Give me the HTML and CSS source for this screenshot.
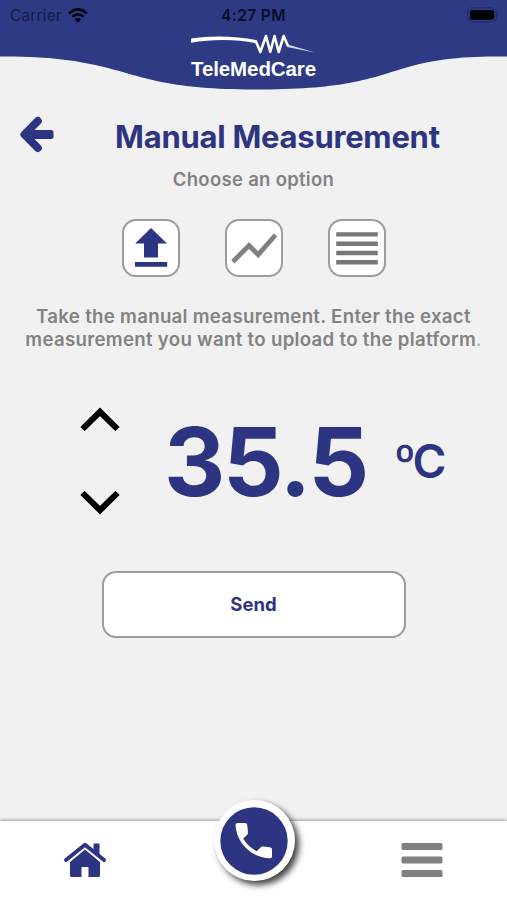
FILE: index.html
```html
<!DOCTYPE html>
<html lang="en">

<head>
    <meta charset="UTF-8">
    <meta name="viewport" content="width=device-width, initial-scale=1.0">
    <title>TeleMedCare</title>
    <link rel="stylesheet" href="styles.css">
</head>

<body>
    <div class="app">
        <!-- header -->
        <header class="header">
            <svg class="wave" width="507" height="90" viewBox="0 0 507 90">
                <path fill="#2e3a84" d="M0 0H507V56.5C472 56.5 442 57 405 68C365 80 342 89.500 254 89.500C172 89.500 146 78 108 68C70 58.500 42 56.500 0 56.500Z" />
            </svg>
            <div class="status">
                <span class="carrier">Carrier
                    <svg width="20" height="15" viewBox="0 0 20 15" fill="none" stroke="#050813" stroke-width="2.700">
                        <path d="M1 5.400Q10 -2.700 19 5.400" />
                        <path d="M4.200 8.800Q10 3.800 15.800 8.800" />
                        <path fill="#050813" stroke="none" d="M10 14.800L6.600 11.300Q10 8.600 13.400 11.300Z" />
                    </svg>
                </span>
                <span class="time">4:27 PM</span>
                <span class="battery">
                    <svg width="32" height="16" viewBox="0 0 32 16">
                        <rect x=".7" y=".8" width="28.600" height="14" rx="4.500" fill="none" stroke="#202962" />
                        <rect x="2.800" y="2.900" width="24.400" height="9.800" rx="2.500" />
                        <path fill="#202962" d="M30.500 5.500Q32.300 7.800 30.500 10Z" />
                    </svg>
                </span>
            </div>
            <div class="logo">
                <svg width="128" height="24" viewBox="0 0 128 24" fill="#fff">
                    <path d="M1 5.500C22 2 48 3 67 7.300L66 10.300C46 6 22 6 1 9.800Z" />
                    <path d="M66 8.500L70.300 19L76 3L80.300 19L84.500 3L88.700 19L93.700 3L98 13" fill="none" stroke="#fff" stroke-width="2.600" stroke-linejoin="round" />
                    <path d="M97.500 11.500L126 19.800L97 14Z" opacity=".8" />
                </svg>
                <span>TeleMedCare</span>
            </div>
        </header>

        <!-- measurement -->
        <main class="content">
            <div class="title_row">
                <svg class="back" width="36" height="37" viewBox="0 0 36 37" fill="none" stroke="#2d3583" stroke-width="8" stroke-linecap="round" stroke-linejoin="round">
                    <path d="M18.800 5L5.500 18.500L18.800 32" />
                    <path stroke-width="9" stroke-linecap="butt" d="M7 18.500H26" />
                    <rect x="20" y="14" width="14.500" height="9" rx="2.500" fill="#2d3583" stroke="none" />
                </svg>
                <h1>Manual Measurement</h1>
            </div>
            <p class="subtitle">Choose an option</p>

            <div class="options">
                <button class="option">
                    <svg width="56" height="56" viewBox="0 0 56 56" fill="#2d3583">
                        <path d="M28 8L44 23.500H35V37.500H21V23.500H12.200ZM12 42H44.200V46.800H12Z" />
                    </svg>
                </button>
                <button class="option">
                    <svg width="56" height="56" viewBox="0 0 56 56" fill="none" stroke="#808080" stroke-width="4.800">
                        <path d="M6.800 41.800L23 25.500L32.200 34.700L49.500 15" />
                    </svg>
                </button>
                <button class="option">
                    <svg width="56" height="56" viewBox="0 0 56 56" fill="#777">
                        <path d="M7.200 12.200H48.800V16.600H7.200ZM7.200 21.500H48.800V25.900H7.200ZM7.200 30.800H48.800V35.200H7.200ZM7.200 40H48.800V44.400H7.200Z" />
                    </svg>
                </button>
            </div>

            <p class="info">
                Take the manual measurement. Enter the exact<br>
                measurement you want to upload to the platform<span class="dot">.</span>
            </p>

            <div class="measure">
                <div class="arrows">
                    <svg width="40" height="26" viewBox="0 0 40 26" fill="none" stroke="#000" stroke-width="6">
                        <path d="M2.500 22.200L20 4.800L37.500 22.200" />
                    </svg>
                    <svg width="40" height="26" viewBox="0 0 40 26" fill="none" stroke="#000" stroke-width="6">
                        <path d="M2.500 3.800L20 21.200L37.500 3.800" />
                    </svg>
                </div>
                <span class="value">35.5</span>
                <span class="unit">ºC</span>
            </div>

            <button class="send">Send</button>
        </main>

        <!-- footer -->
        <footer class="footer">
            <svg class="home" width="44" height="36" viewBox="0 0 44 36" fill="#2d3583">
                <path d="M30.500 1.500H36.500V15L30.500 9.500Z" />
                <path d="M3 18L22 2.800L41 18" fill="none" stroke="#2d3583" stroke-width="4" stroke-linecap="round" stroke-linejoin="round" />
                <path d="M22 7.500L37 20V33.500Q37 35 35.500 35H25.500V25H18.500V35H8.500Q7 35 7 33.500V20Z" />
            </svg>
            <svg class="menu" width="42" height="36" viewBox="0 0 42 36" fill="#808080">
                <rect x=".5" y="1" width="41" height="7" rx="1.500" />
                <rect x=".5" y="14.500" width="41" height="7" rx="1.500" />
                <rect x=".5" y="28" width="41" height="7" rx="1.500" />
            </svg>
            <div class="call">
                <svg width="68" height="68" viewBox="0 0 68 68">
                    <circle cx="34" cy="34" r="33.700" fill="#2d3583" />
                    <path fill="#fff" d="M17.500 16H25Q27 16 27.200 18L28 25.500Q28 27 27 28L23.200 31.500Q27.500 39.500 36.800 44.200L40.500 40.500Q41.500 39.300 43 39.500L50 40.200Q52 40.500 52 42.500V49.500Q52 51.500 50 51.300C31 50.500 16.500 36 15.500 18Q15.500 16 17.500 16Z" />
                </svg>
            </div>
        </footer>
    </div>
</body>

</html>
```
FILE: styles.css
```css
* {
    box-sizing: border-box;
}

body {
    margin: 0;
    background: #f1f1f1;
    font-family: Inter, "Liberation Sans", sans-serif;
}

svg {
    display: block;
    flex: none;
}

button {
    padding: 0;
    background: #fff;
    border: 2px solid #9c9c9c;
    font-family: inherit;
}

.app {
    width: 507px;
    height: 900px;
    display: flex;
    flex-direction: column;
    overflow: hidden;
}

/* header */
.header {
    position: relative;
    height: 90px;
}

.wave {
    position: absolute;
    top: 0;
    left: 0;
}

.status {
    position: relative;
    height: 30px;
    padding: 0 8px 0 10px;
    display: grid;
    grid-template-columns: 1fr auto 1fr;
    align-items: center;
    color: #080d28;
    font-size: 15.5px;
}

.carrier {
    display: flex;
    gap: 6px;
    align-items: center;
    letter-spacing: 0.15px;
    color: #141b46;
}

.time {
    margin-right: 2px;
    font-weight: 600;
    letter-spacing: 0.4px;
}

.battery {
    justify-self: end;
}

.logo {
    position: relative;
    display: flex;
    flex-direction: column;
    align-items: center;
    padding-top: 3px;
    color: #fff;
    font-family: "Liberation Sans", sans-serif;
    font-size: 20.5px;
    font-weight: bold;
    line-height: 24px;
    letter-spacing: -0.1px;
}

/* measurement */
.content {
    flex: 1;
    display: flex;
    flex-direction: column;
    align-items: center;
    color: #828282;
}

.title_row {
    width: 100%;
    height: 60px;
    margin-top: 16px;
    padding-left: 19px;
    display: flex;
    align-items: center;
}

.back {
    margin-top: -3px;
}

h1 {
    margin: 0 0 0 60px;
    color: #2d3583;
    font-size: 31px;
    font-weight: 700;
    letter-spacing: -0.25px;
    white-space: nowrap;
}

.subtitle {
    margin: 1px 0 0;
    font-size: 18.5px;
    font-weight: 600;
    line-height: 24px;
    letter-spacing: 0.3px;
}

.options {
    margin-top: 28px;
    display: flex;
    gap: 45px;
}

.option {
    width: 58px;
    height: 58px;
    border-radius: 14px;
    display: flex;
    align-items: center;
    justify-content: center;
}

.option svg {
    margin-top: -1px;
}

.info {
    margin: 28px 0 0;
    text-align: center;
    font-size: 18.65px;
    font-weight: 600;
    line-height: 23px;
    letter-spacing: 0.3px;
    white-space: nowrap;
}

.dot {
    font-weight: 400;
    color: #aaa;
}

.measure {
    width: 100%;
    height: 108px;
    margin-top: 56px;
    padding-left: 80px;
    display: flex;
    align-items: center;
    color: #2d3583;
}

.arrows {
    height: 108px;
    display: flex;
    flex-direction: column;
    justify-content: space-between;
}

.value {
    margin-left: 44px;
    font-size: 95px;
    font-weight: 700;
    letter-spacing: -2.2px;
}

.unit {
    margin-left: 27px;
    font-size: 46px;
    font-weight: 600;
    letter-spacing: -3px;
}

.send {
    width: 304px;
    height: 67px;
    margin-top: 56px;
    padding-bottom: 2px;
    border-radius: 14px;
    color: #2d3583;
    font-size: 18.5px;
    font-weight: 700;
}

/* footer */
.footer {
    position: relative;
    height: 79px;
    padding: 0 64px 2px 63px;
    display: flex;
    align-items: center;
    justify-content: space-between;
    background: #fff;
    box-shadow: 0 -1px 3px rgba(0, 0, 0, 0.35);
}

.call {
    position: absolute;
    top: -21px;
    left: 213.5px;
    width: 81px;
    height: 81px;
    border-radius: 50%;
    background: #fff;
    box-shadow: 4px 4px 6px rgba(0, 0, 0, 0.75);
    display: flex;
    align-items: center;
    justify-content: center;
}
```
